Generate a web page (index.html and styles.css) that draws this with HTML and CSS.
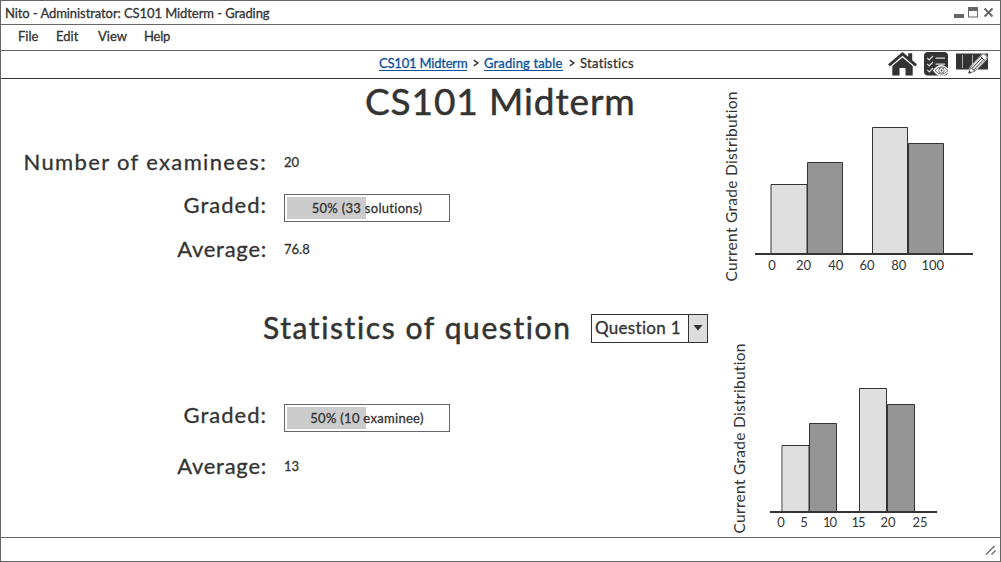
FILE: index.html
```html
<!DOCTYPE html>
<html lang="en">
<head>
<meta charset="utf-8">
<title>Nito - Grading</title>
<link rel="stylesheet" href="styles.css">
</head>
<body>
<div class="window">
  <header class="titlebar">
    <span class="window-title">Nito - Administrator: CS101 Midterm - Grading</span>
    <svg class="window-controls" width="40" height="12" viewBox="0 0 40 12">
      <path d="M0 8h10v4H0z" fill="#666"/>
      <path d="M14 1h10v10.500H14zM15 5v5.500h8V5z" fill="#666" fill-rule="evenodd"/>
      <path d="M30.500 2.500l8 8m0-8l-8 8" stroke="#666" stroke-width="2"/>
    </svg>
  </header>
  <nav class="menubar">
    <span class="menu-file">File</span><span class="menu-edit">Edit</span><span class="menu-view">View</span><span class="menu-help">Help</span>
  </nav>
  <div class="toolbar">
    <nav class="breadcrumb">
      <a class="crumb-exam">CS101 Midterm</a>
      <svg width="6" height="8" viewBox="0 0 6 8"><path d="M.8 1.200L4.800 4 .8 6.800" fill="none" stroke="#333" stroke-width="1.500"/></svg>
      <a class="crumb-table">Grading table</a>
      <svg width="6" height="8" viewBox="0 0 6 8"><path d="M.8 1.200L4.800 4 .8 6.800" fill="none" stroke="#333" stroke-width="1.500"/></svg>
      <span class="crumb-current">Statistics</span>
    </nav>
    <div class="actions">
      <svg width="29" height="24" viewBox="0 0 29 24" fill="#333">
        <path d="M14.500 0L0 12.300l1.900 2.100L14.500 3.800l12.600 10.600 1.900-2.100-4.800-4.100V1.200h-4v3.600z"/>
        <path d="M4.300 14L14.500 5.500 24.700 14v9.500h-7.200V16h-6v7.500H4.300z"/>
      </svg>
      <svg width="25" height="24" viewBox="0 0 25 24">
        <rect width="24" height="23.500" rx="4" fill="#333"/>
        <g fill="none" stroke="#ddd" stroke-width="1.200">
          <path d="M3.200 5.800l2 2L9 4M3.200 11.800l2 2L9 10M3.200 17.800l2 2L9 16"/>
          <path d="M11.500 6.200H21M11.500 12.200H21"/>
        </g>
        <path d="M10 18.500q7-9 14.500 0-7.500 9-14.500 0z" fill="#fff" stroke="#fff" stroke-width="2"/>
        <path d="M11 18.500q6.500-7.500 13 0-6.500 7.500-13 0z" fill="#fff" stroke="#444" stroke-width=".8"/>
        <circle cx="17.500" cy="18.500" r="2.700" fill="#fff" stroke="#444" stroke-width=".8"/><circle cx="17.500" cy="18.500" r="1" fill="#444"/>
      </svg>
      <svg width="33" height="24" viewBox="0 0 33 24">
        <path d="M0 1.500h32v16H0z" fill="#333"/>
        <path d="M6.500 3v13M16.500 3v13" stroke="#aaa"/>
        <path d="M12.800 21.200l1.700-6L26.200 2.800q1.300-1.100 2.700.1l1.400 1.300q1.200 1.300 0 2.700L18.800 19.200z" fill="#333" stroke="#fff" stroke-width="1.500"/>
        <path d="M12.800 21.200l1.700-6L26.200 2.800q1.300-1.100 2.700.1l1.400 1.300q1.200 1.300 0 2.700L18.800 19.200z" fill="#fff" stroke="#555" stroke-width=".7"/>
        <path d="M16 16.500L26.200 5.600M17.700 18L28 7.200M24.500 4.600l4.200 4M14.500 15.200l4.300 4" stroke="#333" stroke-width="1" fill="none"/>
        <path d="M12.500 21.500l.8-3 2.200 2.200z" fill="#333"/>
      </svg>
    </div>
  </div>
  <main class="content">
    <section class="exam">
      <div class="facts">
        <h1>CS101 Midterm</h1>
        <dl class="fact-grid exam-facts">
          <dt class="wide">Number of examinees:</dt><dd>20</dd>
          <dt class="graded">Graded:</dt><dd><div class="progress"><div class="fill"></div><span>50% (33 solutions)</span></div></dd>
          <dt class="average">Average:</dt><dd>76.8</dd>
        </dl>
      </div>
      <svg class="chart" width="281" height="221" viewBox="719 79 281 221">
        <text class="axis-label" transform="translate(736.500 281.500) rotate(-90)" textLength="190">Current Grade Distribution</text>
        <g class="bars">
          <path class="light" d="M771 184.500h36V254h-36z"/>
          <path class="dark" d="M807.500 162.500h35V254h-35z"/>
          <path class="light" d="M872.500 127.500h35V254h-35z"/>
          <path class="dark" d="M908.500 143.500h35V254h-35z"/>
        </g>
        <path class="axis" d="M755 254h218"/>
        <g class="ticks"><text x="772" y="270">0</text><text x="803.500" y="270">20</text><text x="835.700" y="270">40</text><text x="867" y="270">60</text><text x="898.700" y="270">80</text><text x="932.700" y="270">100</text></g>
      </svg>
    </section>
    <section class="question">
      <div class="facts">
        <div class="question-head">
          <h2>Statistics of question</h2>
          <div class="select"><span>Question 1</span><i><svg width="10" height="6" viewBox="0 0 10 6"><path d="M.5 0h9L5 5.500z" fill="#333"/></svg></i></div>
        </div>
        <dl class="fact-grid question-facts">
          <dt class="graded">Graded:</dt><dd><div class="progress"><div class="fill"></div><span>50% (10 examinee)</span></div></dd>
          <dt class="average">Average:</dt><dd>13</dd>
        </dl>
      </div>
      <svg class="chart" width="281" height="237" viewBox="719 300 281 237">
        <text class="axis-label" transform="translate(744.500 533.500) rotate(-90)" textLength="190">Current Grade Distribution</text>
        <g class="bars">
          <path class="light" d="M782 445.500h27V512h-27z"/>
          <path class="dark" d="M809.500 423.500h27V512h-27z"/>
          <path class="light" d="M859.500 388.500h27V512h-27z"/>
          <path class="dark" d="M887.500 404.500h27V512h-27z"/>
        </g>
        <path class="left-edge" d="M782 446v65"/>
        <path class="axis" d="M770 512h167"/>
        <g class="ticks"><text x="781" y="527">0</text><text x="804" y="527">5</text><text x="830" y="527" textLength="14">10</text><text x="858.500" y="527" textLength="14">15</text><text x="888" y="527">20</text><text x="920" y="527">25</text></g>
      </svg>
    </section>
  </main>
  <footer class="statusbar">
    <svg width="11" height="10" viewBox="0 0 11 10"><path d="M1 9.500L9.500 1M6.500 9.500l4-4" stroke="#666" stroke-width="1.300"/></svg>
  </footer>
</div>
</body>
</html>
```
FILE: styles.css
```css
* { box-sizing: border-box; }
body { margin: 0; background: #fff; color: #333; font: 13px/18px Lato, "Open Sans", sans-serif; font-variant-ligatures: none; -webkit-text-stroke: .3px currentColor; }
svg { display: block; flex: none; }
h1, h2, dl, dd { margin: 0; font-weight: 400; }
.window { width: 1001px; height: 562px; border: 1px solid #666; display: flex; flex-direction: column; white-space: nowrap; overflow: hidden; }
.titlebar { height: 24px; border-bottom: 1px solid #666; display: flex; justify-content: space-between; padding: 3px 6px 0 4px; }
.window-title { letter-spacing: -.08px; }
.window-controls { margin-top: 2px; }
.menubar { height: 26px; border-bottom: 1px solid #666; display: flex; padding: 2px 0 0 17px; }
.menu-file { width: 38px; }
.menu-edit { width: 42px; }
.menu-view { width: 46px; }
.menu-help { letter-spacing: -.2px; }
.toolbar { height: 29px; margin: 0 -1px; border: solid #333; border-width: 0 1px 1px; display: flex; padding-left: 378px; }
.breadcrumb { display: flex; align-items: center; gap: 6px; height: 25px; width: 509px; }
.breadcrumb a { color: #0b4f9c; border-bottom: 1px solid #0b4f9c; line-height: 14px; margin-top: 1px; }
.crumb-exam { width: 88px; letter-spacing: -.2px; }
.crumb-table { width: 79px; margin-left: -1px; letter-spacing: .15px; }
.crumb-current { margin-left: -1px; letter-spacing: .3px; }
.actions { display: flex; gap: 7px; padding-top: 1px; }
.content { flex: 1; }
.exam, .question { display: grid; grid-template-columns: 718px 281px; }
.exam { height: 221px; }
.question { height: 237px; }
h1 { height: 61px; padding-left: 364px; font-size: 37px; line-height: 43px; letter-spacing: .9px; }
h1, h2 { -webkit-text-stroke-width: .5px; }
.fact-grid { display: grid; grid-template-columns: 266px 1fr; column-gap: 17px; align-items: center; }
.exam-facts { grid-template-rows: 44px 44px 42px; }
.question-facts { grid-template-rows: 48px 52px; padding-top: 38px; }
dt { text-align: right; font-size: 22px; line-height: 26px; padding-bottom: 1px; }
.wide { letter-spacing: 1.35px; }
.graded { letter-spacing: 1px; padding-bottom: 2px; }
.average { letter-spacing: .75px; }
.progress { position: relative; width: 166px; height: 28px; margin-top: 4px; border: 1px solid #666; padding: 2px; text-align: center; line-height: 26px; letter-spacing: .3px; }
.fill { width: 79px; height: 22px; background: #ccc; }
.progress span { position: absolute; inset: 0; }
.question-head { height: 54px; display: flex; align-items: center; padding-left: 262px; }
h2 { width: 328px; font-size: 30px; line-height: 36px; letter-spacing: 1.6px; padding-bottom: 1px; }
.select { width: 117px; height: 29px; margin-top: 2px; border: 1px solid #333; display: flex; justify-content: space-between; font-size: 17px; line-height: 26px; padding-left: 3px; letter-spacing: .3px; }
.select i { width: 19px; border-left: 1px solid #333; background: #ddd; display: flex; align-items: center; justify-content: center; }
.chart { fill: #333; stroke-width: 1; }
.axis-label { font-size: 15.5px; }
.bars path { stroke: #333; }
.light { fill: #dfdfdf; }
.dark { fill: #959595; }
.axis { stroke: #333; stroke-width: 2; }
.left-edge { stroke: #999; stroke-width: 2; }
.ticks text { text-anchor: middle; }
.statusbar { height: 24px; border-top: 1px solid #666; display: flex; justify-content: flex-end; padding: 7px 4px 0 0; }
```
